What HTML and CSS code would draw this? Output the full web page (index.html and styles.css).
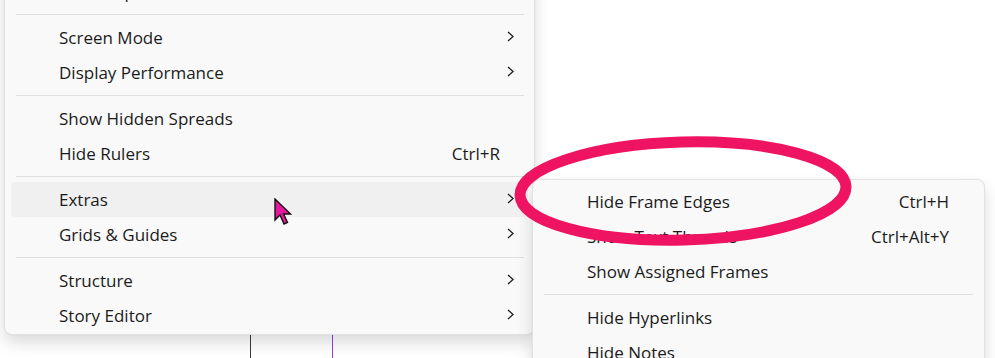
FILE: index.html
```html
<!DOCTYPE html>
<html>
<head>
<meta charset="utf-8">
<link rel="stylesheet" href="styles.css">
</head>
<body>
<div class="stage">
  <div class="guide guide-dark"></div>
  <div class="guide guide-purple"></div>

  <div class="menu main-menu">
    <div class="item"><span class="label">Rotate Spread</span><span class="key"></span><span class="slot"><svg class="chev" viewBox="0 0 7 11"><path d="M1 1 L6 5.5 L1 10"/></svg></span></div>
    <div class="sep"></div>
    <div class="item"><span class="label">Screen Mode</span><span class="key"></span><span class="slot"><svg class="chev" viewBox="0 0 7 11"><path d="M1 1 L6 5.5 L1 10"/></svg></span></div>
    <div class="item"><span class="label">Display Performance</span><span class="key"></span><span class="slot"><svg class="chev" viewBox="0 0 7 11"><path d="M1 1 L6 5.5 L1 10"/></svg></span></div>
    <div class="sep"></div>
    <div class="item"><span class="label">Show Hidden Spreads</span><span class="key"></span><span class="slot"></span></div>
    <div class="item"><span class="label">Hide Rulers</span><span class="key">Ctrl+R</span><span class="slot"></span></div>
    <div class="sep"></div>
    <div class="item active"><span class="label">Extras</span><span class="key"></span><span class="slot"><svg class="chev" viewBox="0 0 7 11"><path d="M1 1 L6 5.5 L1 10"/></svg></span></div>
    <div class="item"><span class="label">Grids &amp; Guides</span><span class="key"></span><span class="slot"><svg class="chev" viewBox="0 0 7 11"><path d="M1 1 L6 5.5 L1 10"/></svg></span></div>
    <div class="sep"></div>
    <div class="item"><span class="label">Structure</span><span class="key"></span><span class="slot"><svg class="chev" viewBox="0 0 7 11"><path d="M1 1 L6 5.5 L1 10"/></svg></span></div>
    <div class="item"><span class="label">Story Editor</span><span class="key"></span><span class="slot"><svg class="chev" viewBox="0 0 7 11"><path d="M1 1 L6 5.5 L1 10"/></svg></span></div>
  </div>

  <div class="menu sub-menu">
    <div class="item"><span class="label">Hide Frame Edges</span><span class="key">Ctrl+H</span><span class="slot"></span></div>
    <div class="item"><span class="label">Show Text Threads</span><span class="key">Ctrl+Alt+Y</span><span class="slot"></span></div>
    <div class="item"><span class="label">Show Assigned Frames</span><span class="key"></span><span class="slot"></span></div>
    <div class="sep"></div>
    <div class="item"><span class="label">Hide Hyperlinks</span><span class="key"></span><span class="slot"></span></div>
    <div class="item"><span class="label">Hide Notes</span><span class="key"></span><span class="slot"></span></div>
  </div>

  <svg class="mark" width="995" height="358" viewBox="0 0 995 358">
    <ellipse cx="683" cy="191" rx="163" ry="49" transform="rotate(-1.5 683 191)"/>
  </svg>

  <svg class="cursor" width="22" height="30" viewBox="0 0 22 30">
    <path d="M1 1 L1 22 L6 17 L10 26 L13.5 24.5 L9.6 16 L16.5 16 Z"/>
  </svg>
</div>
</body>
</html>
```

FILE: styles.css
```css
html, body {
  margin: 0;
  padding: 0;
  background: #ffffff;
}

.stage {
  position: relative;
  width: 995px;
  height: 358px;
  overflow: hidden;
  background: #ffffff;
  font-family: "Open Sans", "Noto Sans", sans-serif;
  font-size: 17px;
  color: #1b1b1b;
}

.guide {
  position: absolute;
  top: 300px;
  bottom: 0;
  width: 1px;
}
.guide-dark { left: 250px; background: #3a3a3a; }
.guide-purple { left: 332px; background: #9a3fd0; }

.menu {
  position: absolute;
  box-sizing: border-box;
  background: #f9f9f9;
  border: 1px solid #e2e2e2;
  border-radius: 8px;
  padding: 4px 6px;
  display: flex;
  flex-direction: column;
  box-shadow: 0 8px 16px rgba(0, 0, 0, 0.14), 0 0 2px rgba(0, 0, 0, 0.06);
}

.main-menu {
  left: 4px;
  top: -31px;
  width: 531px;
  padding-bottom: 1px;
}

.sub-menu {
  left: 532px;
  top: 179px;
  width: 453px;
  height: 200px;
}

.item {
  height: 35px;
  flex: none;
  display: flex;
  align-items: center;
  padding: 0 14px 0 48px;
  border-radius: 4px;
  white-space: nowrap;
}

.item.active {
  background: #f0f0f0;
}

.label {
  flex: 1;
}

.key {
  text-align: right;
}

.slot {
  width: 14px;
  display: flex;
  justify-content: flex-end;
  align-items: center;
}

.sub-menu .slot {
  width: 15px;
}

.chev {
  width: 7px;
  height: 11px;
  fill: none;
  stroke: #1b1b1b;
  stroke-width: 1.3;
  margin-top: -3px;
}

.sep {
  height: 1px;
  flex: none;
  margin: 5px 4px 5px 5px;
  background: #e0e0e0;
}

.sub-menu .sep {
  margin: 5px 5px 5px 5px;
}

.mark {
  position: absolute;
  left: 0;
  top: 0;
}
.mark ellipse {
  fill: none;
  stroke: #ef1461;
  stroke-width: 11;
}

.cursor {
  position: absolute;
  left: 274px;
  top: 198px;
}
.cursor path {
  fill: #e6179f;
  stroke: #111111;
  stroke-width: 1.4;
  stroke-linejoin: miter;
}
```
